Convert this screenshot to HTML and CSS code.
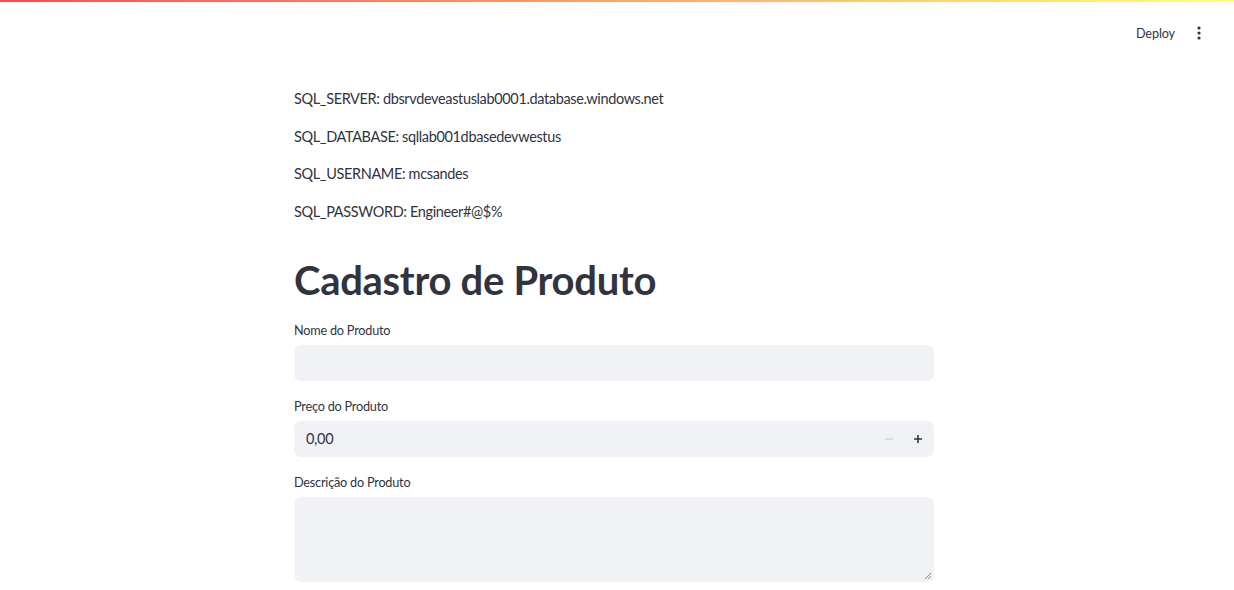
FILE: index.html
```html
<!DOCTYPE html>
<html lang="pt">
<head>
<meta charset="utf-8">
<title>Cadastro de Produto</title>
<link rel="stylesheet" href="styles.css">
</head>
<body>
<div class="decoration"></div>
<header class="header">
  <span class="deploy">Deploy</span>
  <span class="menu">
    <svg width="4" height="14" viewBox="0 0 4 14"><circle cx="2" cy="2" r="1.6"/><circle cx="2" cy="7" r="1.6"/><circle cx="2" cy="12" r="1.6"/></svg>
  </span>
</header>
<main class="main">
  <div class="block">
    <p class="line">SQL_SERVER: dbsrvdeveastuslab0001.database.windows.net</p>
    <p class="line">SQL_DATABASE: sqllab001dbasedevwestus</p>
    <p class="line">SQL_USERNAME: mcsandes</p>
    <p class="line">SQL_PASSWORD: Engineer#@$%</p>
    <h1 class="title">Cadastro de Produto</h1>
    <div class="field">
      <label class="label">Nome do Produto</label>
      <div class="input"></div>
    </div>
    <div class="field">
      <label class="label">Preço do Produto</label>
      <div class="input number">
        <span class="value">0,00</span>
        <span class="steps">
          <span class="step minus"><svg width="10" height="10" viewBox="0 0 10 10"><path d="M1 5h8" stroke="#d3d4d8" stroke-width="1.4"/></svg></span>
          <span class="step plus"><svg width="10" height="10" viewBox="0 0 10 10"><path d="M1 5h8M5 1v8" stroke="#31333f" stroke-width="1.6"/></svg></span>
        </span>
      </div>
    </div>
    <div class="field">
      <label class="label">Descrição do Produto</label>
      <div class="input textarea">
        <svg class="grip" width="8" height="8" viewBox="0 0 8 8"><path d="M7 1L1 7M7 4L4 7" stroke="#8a8c94" stroke-width="1"/></svg>
      </div>
    </div>
  </div>
</main>
</body>
</html>
```
FILE: styles.css
```css
* { box-sizing: border-box; }
html, body { margin: 0; padding: 0; background: #ffffff; }
body {
  font-family: "Source Sans Pro", Lato, "Liberation Sans", sans-serif;
  color: rgb(49, 51, 63);
  width: 1234px;
  height: 590px;
  overflow: hidden;
}
.decoration {
  height: 2px;
  background: linear-gradient(90deg, rgb(255, 75, 75), rgb(255, 253, 128));
}
.header {
  display: flex;
  justify-content: flex-end;
  align-items: center;
  height: 66px;
  padding: 0 33px 0 0;
  margin-top: -2px;
}
.deploy {
  font-size: 12.6px;
  letter-spacing: -0.1px;
  margin-right: 22px;
}
.menu { display: flex; align-items: center; }
.menu svg { fill: rgb(49, 51, 63); }
.main {
  display: flex;
  justify-content: center;
  padding-right: 6px;
  margin-top: -6px;
}
.block {
  width: 640px;
  padding-top: 27px;
  display: flex;
  flex-direction: column;
}
.line {
  margin: 0 0 14.5px 0;
  font-size: 14.5px;
  line-height: 23.2px;
  letter-spacing: -0.36px;
}
.title {
  margin: 18px 0 0 0;
  font-size: 40px;
  font-weight: 700;
  line-height: 48px;
  letter-spacing: -0.3px;
}
.field {
  display: flex;
  flex-direction: column;
  margin-top: 15px;
}
.title + .field { margin-top: 16px; }
.label {
  font-size: 12.7px;
  line-height: 20px;
  margin-bottom: 5px;
  letter-spacing: -0.22px;
}
.input {
  height: 36px;
  background: rgb(240, 242, 246);
  border-radius: 7px;
  display: flex;
  align-items: center;
}
.number { justify-content: space-between; padding: 0 0 0 12px; }
.value { font-size: 14.5px; letter-spacing: -0.3px; }
.steps { display: flex; height: 100%; padding-right: 2px; }
.step {
  width: 29px;
  display: flex;
  align-items: center;
  justify-content: center;
}
.textarea {
  height: 85px;
  position: relative;
}
.grip { position: absolute; right: 2px; bottom: 2px; }
```
